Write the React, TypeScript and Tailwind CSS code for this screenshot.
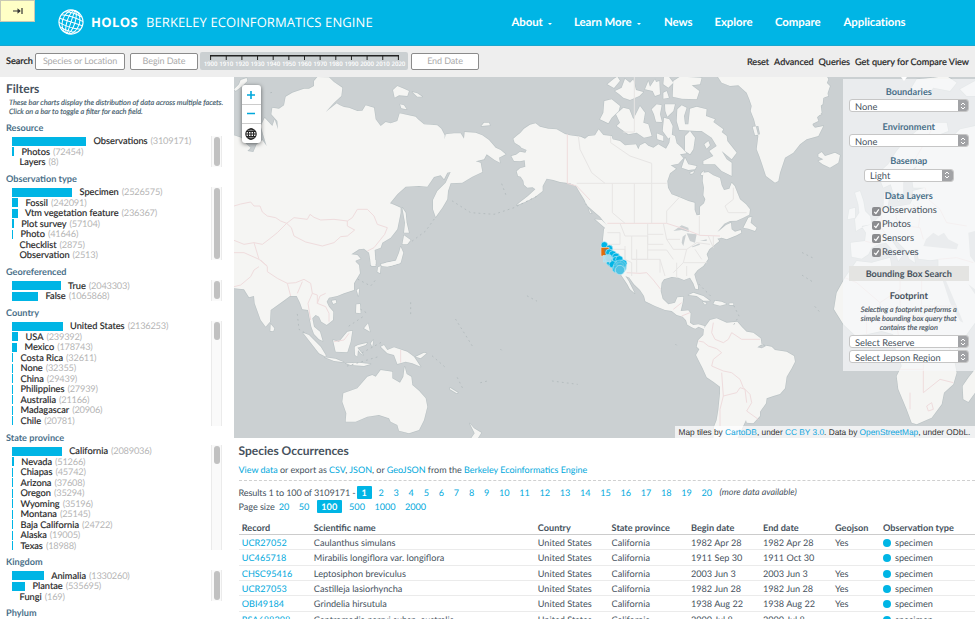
import React from "react";

type Facet = { label: string; count: number; bar: number };
type Section = { title: string; thumb: number; rows: Facet[] };

const f = (label: string, count: number, bar: number): Facet => ({ label, count, bar });

const sections: Section[] = [
  { title: "Resource", thumb: 29, rows: [f("Observations", 3109171, 74), f("Photos", 72454, 2), f("Layers", 8, 0)] },
  {
    title: "Observation type",
    thumb: 71,
    rows: [
      f("Specimen", 2526575, 60),
      f("Fossil", 242091, 6),
      f("Vtm vegetation feature", 236367, 5.5),
      f("Plot survey", 57104, 1.8),
      f("Photo", 41646, 1),
      f("Checklist", 2875, 0),
      f("Observation", 2513, 0),
    ],
  },
  { title: "Georeferenced", thumb: 18, rows: [f("True", 2043303, 48.5), f("False", 1065868, 26)] },
  {
    title: "Country",
    thumb: 18,
    rows: [
      f("United States", 2136253, 50.5),
      f("USA", 239392, 6),
      f("Mexico", 178743, 5),
      f("Costa Rica", 32611, 1),
      f("None", 32355, 1),
      f("China", 29439, 1),
      f("Philippines", 27939, 1),
      f("Australia", 21166, 1),
      f("Madagascar", 20906, 1),
      f("Chile", 20781, 1),
    ],
  },
  {
    title: "State province",
    thumb: 18,
    rows: [
      f("California", 2089036, 49.7),
      f("Nevada", 51266, 1.8),
      f("Chiapas", 45742, 1),
      f("Arizona", 37608, 1),
      f("Oregon", 35294, 1),
      f("Wyoming", 35196, 1),
      f("Montana", 25145, 1),
      f("Baja California", 24722, 1),
      f("Alaska", 19005, 1),
      f("Texas", 18988, 1),
    ],
  },
  { title: "Kingdom", thumb: 29, rows: [f("Animalia", 1330260, 31.7), f("Plantae", 535695, 13), f("Fungi", 169, 0)] },
];

const records = [
  ["UCR27052", "Caulanthus simulans", "1982 Apr 28", "1982 Apr 28", "Yes"],
  ["UC465718", "Mirabilis longiflora var. longiflora", "1911 Sep 30", "1911 Oct 30", ""],
  ["CHSC95416", "Leptosiphon breviculus", "2003 Jun 3", "2003 Jun 3", "Yes"],
  ["UCR27053", "Castilleja lasiorhyncha", "1982 Jun 28", "1982 Jun 28", "Yes"],
  ["OBI49184", "Grindelia hirsutula", "1938 Aug 22", "1938 Aug 22", "Yes"],
  ["RSA688298", "Centromadia parryi subsp. australis", "2000 Jul 8", "2000 Jul 8", ""],
];

function Logo() {
  return (
    <svg width="26" height="26" viewBox="-13 -13 26 26" fill="none" stroke="white" strokeWidth="1">
      <g transform="rotate(18)">
        <circle r="12" strokeWidth="1.2" />
        <ellipse rx="4" ry="12" />
        <ellipse rx="8.5" ry="12" />
        <path d="M0-12V12M-12 0H12M-11.3-4Q0-6.5 11.3-4M-11.3 4Q0 6.5 11.3 4M-8.8-8Q0-10.5 8.8-8M-8.8 8Q0 10.5 8.8 8" />
      </g>
    </svg>
  );
}

function Header() {
  return (
    <header className="relative flex h-[46px] shrink-0 items-center border-b border-[#18a7d0] bg-[#00b5e5] text-white">
      <div className="absolute left-0 top-0 flex h-[22px] w-[35px] items-center justify-center border border-[#c9c9b4] bg-[#ffffc6]">
        <svg width="10" height="8" viewBox="0 0 10 8" fill="none" stroke="#333" strokeWidth="1.2">
          <path d="M0 4H7M9 1V7" />
          <path d="M4.5 1.2L7.8 4L4.5 6.8Z" fill="#333" stroke="none" />
        </svg>
      </div>
      <div className="ml-[58px] flex w-[453.5px] items-center">
        <div className="-mt-[2px]"><Logo /></div>
        <span className="ml-[7px] w-[55px] whitespace-nowrap font-['Open_Sans',sans-serif] text-[13px] font-bold tracking-[0.35px]">HOLOS</span>
        <span className="whitespace-nowrap font-['Open_Sans',sans-serif] text-[13px] tracking-[0.1px]">BERKELEY ECOINFORMATICS ENGINE</span>
      </div>
      <nav className="grid grid-cols-[62.5px_90px_50.5px_60.5px_68.5px_70px] whitespace-nowrap pt-[1px] text-[11.4px] font-bold tracking-[-0.07px]">
        <span className="flex items-center">About<i className="ml-[5px] mt-[2px] border-x-[2.5px] border-t-2 border-x-transparent border-t-white" /></span>
        <span className="flex items-center">Learn More<i className="ml-[5px] mt-[2px] border-x-[2.5px] border-t-2 border-x-transparent border-t-white" /></span>
        <span>News</span>
        <span>Explore</span>
        <span>Compare</span>
        <span>Applications</span>
      </nav>
    </header>
  );
}

function Timeline() {
  const years = Array.from({ length: 13 }, (_, i) => 1900 + i * 10);
  return (
    <svg className="ml-[2px] rounded-[2px] bg-[#cbd0d2]" width="208" height="18" viewBox="0 0 208 18">
      <path d="M10 3.7H199" stroke="#222" strokeWidth="1.4" />
      {years.map((y, i) => (
        <g key={y}>
          <path d={`M${10.6 + i * 15.65} 3V8`} stroke="#222" strokeWidth="1" />
          <text x={10.6 + i * 15.65} y="14.2" fill="white" fontSize="6.1" textAnchor="middle" fontFamily="Open Sans, sans-serif" fontWeight="600">{y}</text>
        </g>
      ))}
    </svg>
  );
}

function SearchBar() {
  const input = "flex h-[17px] items-center justify-center rounded-[2px] border border-[#8b8b8b] bg-white text-[9px] tracking-[-0.1px] text-[#aaa]";
  return (
    <div className="flex h-[31px] shrink-0 items-center justify-between bg-[#eee] pb-[1px] pl-[6px] pr-[6px] text-[9.1px] text-[#222]">
      <div className="flex items-center">
        <span className="w-[29px] font-medium [-webkit-text-stroke:0.2px]">Search</span>
        <span className={`${input} w-[90px]`}>Species or Location</span>
        <span className={`${input} ml-[5px] w-[68px]`}>Begin Date</span>
        <Timeline />
        <span className={`${input} ml-[3px] w-[68px]`}>End Date</span>
      </div>
      <div className="flex gap-[5px] whitespace-nowrap pt-[1px] text-[9.1px] [-webkit-text-stroke:0.2px]">
        <span>Reset</span>
        <span>Advanced</span>
        <span>Queries</span>
        <span>Get query for Compare View</span>
      </div>
    </div>
  );
}

function Sidebar() {
  return (
    <aside className="w-[234px] shrink-0 overflow-hidden bg-white pl-[6px]">
      <h2 className="mt-[4px] h-[15px] text-[12px] font-bold leading-[15px] text-[#46525d]">Filters</h2>
      <p className="ml-[3px] mt-[1.5px] whitespace-nowrap text-[7.37px] italic leading-[9.2px] text-[#435b6b] [-webkit-text-stroke:0.15px]">
        These bar charts display the distribution of data across multiple facets.
        <br />
        Click on a bar to toggle a filter for each field.
      </p>
      {sections.map((s, i) => (
        <section key={s.title}>
          <h3 className={`${i === 0 ? "h-[19.6px] pt-[6px]" : "h-[19.7px] pt-[6px]"} text-[9.15px] font-bold leading-[12px] text-[#4a7089]`}>{s.title}</h3>
          <div className="flex justify-between pl-[6px] pr-[12px]">
            <div className="-mb-[0.5px] pt-[0.5px]">
              {s.rows.map((r) => (
                <div key={r.label} className="flex h-[10.5px] items-center whitespace-nowrap text-[9.25px] leading-[10px]">
                  <span className="h-[9px] bg-[#00b5e5]" style={{ width: r.bar }} />
                  <span className="ml-[7.5px] text-[#222] [-webkit-text-stroke:0.15px]">{r.label}</span>
                  <span className="ml-[3px] tracking-[-0.22px] text-[#b5b5b5]">({r.count})</span>
                </div>
              ))}
            </div>
            <div className="w-[11px] border-x border-[#ebebeb] bg-[#fafafa] pl-[2px] pt-[1px]">
              <div className="w-[6px] rounded-full bg-[#c1c1c1]" style={{ height: s.thumb }} />
            </div>
          </div>
        </section>
      ))}
      <h3 className="pt-[6px] text-[9.15px] font-bold leading-[12px] text-[#4a7089]">Phylum</h3>
    </aside>
  );
}

const northAmerica =
  "M0,152L-13,142L-30,146L-48,158L-60,172L-66,176L-80,188L-76,200L-60,210L-56,215L-40,222L-44,230L-60,227L-72,236L-86,240L-78,255L-60,256L-46,253L-44,272L-60,277L-70,286L-66,300L-58,302L-50,314L-48,326L-38,335L-22,334L-14,340L-36,360L-62,380L-70,388L-45,378L-14,362L8,345L8,330L20,308L40,312L60,318L90,322L108,330L120,350L132,370L143,390L160,405L180,422L200,448L192,460L190,480L188,500L186,520L192,545L204,565L225,580L240,592L250,607L262,625L270,640L284,652L276,635L266,615L256,600L268,605L282,625L300,642L312,660L316,676L345,690L375,702L395,705L410,717L428,722L438,733L442,746L458,755L466,758L476,752L492,760L494,750L475,745L460,747L450,740L452,712L445,703L422,705L428,680L430,662L412,664L405,680L385,685L368,668L362,645L365,620L372,610L395,603L415,605L432,612L450,605L460,622L466,638L474,640L474,630L467,610L463,595L473,582L490,570L505,548L500,535L508,520L520,510L538,495L532,488L545,485L560,490L590,478L604,470L602,462L585,467L575,460L573,440L558,447L540,462L532,468L553,443L570,435L590,434L610,425L628,416L630,400L618,385L600,370L592,350L584,330L575,320L568,338L552,342L545,328L540,306L520,298L505,288L490,290L488,315L492,335L490,358L496,370L492,382L480,392L480,416L470,418L464,402L464,380L445,375L415,362L395,355L384,335L382,315L390,292L408,278L392,268L415,263L430,247L420,235L440,232L425,215L410,202L405,180L392,175L388,200L378,218L355,205L340,215L325,209L315,200L300,208L295,220L288,205L255,208L240,195L218,190L215,180L190,177L176,160L165,178L145,180L135,188L122,182L90,178L75,174L50,160L25,158Z";

const islands =
  "M202,25L222,8L232,2L240,14L222,36Z M225,45L245,35L255,8L270,20L280,10L288,42L310,48L298,60L270,72L250,65L238,55Z M315,40L325,15L330,32L345,10L348,18L358,15L360,55L345,60L338,45Z M370,50L380,45L387,65L370,68Z M372,0L385,0L400,20L385,35L370,25Z M398,62L400,15L420,2L485,5L480,25L455,28L478,45L470,70L425,68Z M193,75L215,70L240,90L236,105L215,125L205,142L180,130L190,110Z M228,115L250,95L268,100L280,130L300,90L315,110L310,140L325,145L335,180L312,185L290,170L265,175L230,150L240,140Z M335,100L350,85L365,88L360,115L366,138L348,137L342,115Z M375,85L405,85L400,105L382,122L376,105Z M372,125L388,130L398,150L395,180L385,188L368,165Z M350,172L370,180L370,195L352,190Z M412,100L425,88L440,95L432,120L435,145L445,145L450,98L470,92L500,100L498,120L525,130L520,138L550,160L545,168L560,180L562,195L590,230L575,250L545,225L560,250L575,260L575,300L545,285L525,265L490,265L490,255L520,240L508,225L530,210L515,185L485,165L470,165L418,162L410,135Z M435,245L445,265L470,270L465,280L445,282L425,275Z M435,180L450,165L465,185L460,220L450,235L435,225Z M493,205L505,195L510,208L500,218Z M450,290L462,285L460,292L452,294Z M485,290L492,285L490,298L482,296Z M610,455L625,425L635,422L632,440L650,455L645,465L625,458Z M165,430L185,432L203,450L198,458Z M133,360L142,375L138,385Z M145,395L155,412L150,410Z M532,0L545,20L570,30L595,28L620,50L628,70L635,90L632,105L642,130L655,180L650,220L658,240L665,260L678,300L705,320L715,315L720,290L735,245L760,230L780,205L800,190L835,180L850,150L825,155L815,145L835,135L830,120L845,115L820,105L848,85L850,65L865,60L855,35L865,10L860,0Z M638,152L655,150L660,175L645,178Z M835,235L845,228L855,240L885,230L900,238L895,260L870,275L848,265L835,255L850,250L835,242Z";

const centralSouth =
  "M445,105L460,98L490,108L510,122L490,122L470,108Z M525,122L545,125L560,132L540,137L520,132Z M488,125L500,129L495,134Z M568,130L580,130L580,135L568,135Z M492,205L490,225L475,240L470,260L478,268L468,285L478,305L488,325L500,352L520,365L540,380L540,400L535,450L530,480L522,500L520,540L590,540L618,480L620,488L640,490L660,468L660,455L678,430L680,415L700,408L720,402L735,385L740,350L755,325L765,305L762,288L740,275L705,270L695,260L665,255L662,235L640,218L620,215L605,200L592,185L560,188L530,175L510,180Z M652,262L665,253L678,258L665,265Z";

const asia =
  "M0,178L22,185L38,205L50,215L40,225L58,228L68,205L85,192L98,210L88,178L80,150L92,125L115,150L122,130L132,160L130,135L112,115L115,95L135,98L150,88L155,62L175,50L190,45L210,38L225,38L240,30L240,15L250,3L285,4L300,18L325,35L322,60L300,80L275,108L308,82L318,88L330,93L345,95L370,105L385,104L395,88L420,95L425,130L440,150L455,138L470,142L490,135L497,112L545,122L552,130L570,145L610,148L622,158L632,178L632,190L635,175L660,172L680,172L690,188L692,168L725,170L745,178L765,192L785,215L800,222L815,235L795,245L798,260L782,252L758,235L750,250L725,256L740,260L745,288L715,302L685,320L650,322L642,345L640,370L625,395L605,423L597,400L597,372L610,345L635,320L650,288L640,290L630,310L620,298L600,303L580,332L555,330L515,332L490,355L468,382L480,386L500,395L500,410L490,460L470,485L445,500L440,515L422,522L425,570L412,570L405,530L390,518L375,520L352,535L370,537L380,548L362,555L365,570L0,570Z M0,40L15,25L20,12L38,6L40,15L25,30L5,45Z M477,42L490,30L510,38L525,45L520,60L495,58L482,65Z M535,48L550,52L565,62L550,62Z M498,85L510,88L518,100L502,97Z M742,150L750,140L765,140L768,148Z M505,395L515,410L518,440L525,470L510,470L513,440Z M510,478L530,492L520,505L505,505Z M500,512L508,530L500,560L470,570L445,570L440,564L485,555L495,530Z";

const southAsia =
  "M0,-10L365,-10L365,5L375,15L378,40L360,70L360,90L330,100L310,108L285,113L278,125L285,140L298,155L297,180L278,195L262,185L255,170L245,165L235,175L240,200L258,215L266,243L255,238L240,222L232,200L222,150L205,148L198,128L188,108L168,108L155,118L110,150L108,185L95,200L80,180L62,130L60,108L45,112L30,88L0,85Z M110,192L121,205L118,214L109,213Z M293,122L305,120L307,128L298,132Z M368,90L376,85L373,108Z M367,133L378,132L380,160L366,158Z M390,205L402,190L408,215Z M410,0L425,0L425,12L410,15Z M432,22L440,18L438,40L430,35Z M440,18L455,8L495,0L498,10L460,20Z M207,218L225,225L260,260L275,285L275,290L255,280Z M272,292L305,296L330,307L300,303Z M335,310L375,308L410,312L390,318L350,315Z M297,240L315,245L340,215L355,212L350,245L340,277L305,275Z M362,260L372,255L400,248L395,255L370,263L388,285L380,280L372,270L370,290L363,285Z M410,250L418,240L415,260Z M440,260L450,255L460,270L480,262L520,275L540,290L560,320L535,310L515,305L490,312L480,285L460,280Z M545,290L570,278L578,280L560,295Z M512,320L518,342L532,350L535,375L555,392L575,415L580,440L570,480L555,510L525,520L495,512L490,495L470,485L465,475L435,465L400,470L365,485L335,485L337,460L325,425L328,400L370,385L400,350L415,345L425,350L440,330L475,335L475,355L498,368L508,350Z M648,383L672,398L668,400L648,388Z M707,490L720,505L742,518L732,534L712,534L722,520Z";

const europeAfrica =
  "M170,555L215,560L270,545L275,575L298,580L320,597L335,580L365,585L400,592L415,575L415,550L390,553L355,548L352,520L340,522L345,560L328,548L315,520L285,490L270,485L290,515L310,535L295,555L285,530L258,500L235,505L215,515L205,535L185,548L155,542L152,500L195,495L198,470L185,450L215,445L245,415L250,400L252,352L266,345L266,375L262,395L300,390L330,385L340,365L338,345L375,335L340,335L335,300L350,270L325,290L310,320L310,355L295,375L280,350L272,325L250,335L240,310L242,285L265,265L290,225L320,190L350,165L395,140L440,140L445,165L420,175L450,190L480,160L525,150L525,740L500,775L460,840L470,890L460,925L432,950L425,985L395,1025L350,1045L335,1040L320,1000L295,940L290,900L305,870L295,830L275,800L280,775L245,765L200,775L165,778L130,745L102,700L110,650L135,605Z M168,465L190,452L215,445L210,420L195,405L190,375L180,345L165,350L175,385L178,410L165,430Z M143,430L148,400L165,395L165,425Z M490,970L488,930L505,905L525,880L525,950L505,978Z M320,60L350,10L400,5L440,0L470,20L450,45L400,35L380,60L350,55Z M480,40L525,15L525,60L500,60Z M95,0L60,0L90,30L80,60L60,70L65,110L40,135L35,160L0,165L0,0Z";

function MapView() {
  return (
    <svg className="block" width="741" height="361" viewBox="0 3 2223 1083">
      <defs>
        <g id="land">
          <path d={asia} />
          <path d={southAsia} transform="translate(0 552)" />
          <path d={northAmerica} transform="translate(918 0)" />
          <path d={islands} transform="translate(918 0)" />
          <path d={centralSouth} transform="translate(918 552)" />
          <path d={europeAfrica} transform="translate(1698 0)" />
        </g>
      </defs>
      <rect width="2223" height="1086" fill="#cbd0d2" />
      <use href="#land" fill="#f5f5f3" stroke="#bcc4c6" strokeWidth="4" strokeLinejoin="round" />
      <use href="#land" fill="#f5f5f3" />
      {/* Inland water */}
      <g fill="#cbd0d2" transform="translate(918 0)">
        <path d="M400,465L425,448L445,455L447,468L425,462Z M428,482L438,475L430,510L425,500Z M440,472L470,475L465,500L450,495Z M455,512L478,502L480,506L458,514Z M480,495L500,490L500,495Z M462,350h8v10h-8z" />
      </g>
      <g fill="#cbd0d2" transform="translate(1698 0)">
        <path d="M370,510L378,490L400,470L415,480L432,470L445,490L475,505L470,520L420,515Z M422,595L432,600L470,690L490,740L480,735L450,680Z M505,470L525,465L525,560L510,540Z M525,640L505,625L525,655Z" />
      </g>
      {/* Country borders */}
      <g fill="none" stroke="#efdcdd" strokeWidth="3">
        <path d="M0,390L20,384L50,378L60,390L78,390L85,408L100,420L125,425L140,435L158,442L180,425L220,430L228,415L240,424L260,432L300,430L340,435L355,425L370,400L400,400L420,420L430,445L460,455L452,475L440,490L420,515L400,525 M158,442L172,455L180,480L215,498L265,510L300,500L320,482L340,480L362,462L340,450L340,435 M158,442L130,470L105,490L85,505L60,500L30,505L0,493 M60,500L75,550L30,530L0,530 M75,550L100,570" />
        <g transform="translate(0 552)">
          <path d="M80,0L100,20L100,35L130,55L160,70L185,68L210,58L230,70L235,100L222,130L230,180 M160,70L170,108M190,100L205,65 M235,100L250,105L250,130L275,140L285,160L285,185M250,130L258,108L275,100M300,245L330,240L345,220 M500,270V308M0,80L20,75L50,50L60,30L75,20" />
        </g>
        <g transform="translate(918 0)">
          <path d="M82,175V322L110,330L150,372 M202,442H380L430,458L480,478L540,480 M260,590L300,592L320,590L340,612L362,640 M400,700L425,680M425,720L450,710" />
          <path d="M520,740L515,770L525,790L550,800L565,790L575,770L605,790L660,790 M475,795L490,798L505,810L530,818L545,830L520,850L515,870L550,885L575,890L600,910L610,935L630,955L635,980L620,1005L655,1030 M545,890L550,960L540,1000L540,1050 M550,960L590,950L600,935L615,940L620,980" />
        </g>
        <g transform="translate(1698 0)">
          <path d="M195,495L230,505M245,420L240,450L258,475M285,400L290,430L320,450L360,455L370,490M340,385L360,420L355,455M375,335L385,370L420,400L440,440L500,450M345,250L380,190L400,150M135,605L170,620L240,680L300,640V590M300,640V700L340,720H440M365,585V690H470M240,680L235,740L290,750L330,720M200,775V700M290,750L300,800L340,820L400,780L440,800L460,840M300,880H370V840L420,850M370,880V950L420,910L460,920M330,1000V950M380,990L395,980L400,1000L385,1005ZM415,550L470,545L520,560" />
        </g>
      </g>
      {/* State and province borders */}
      <g transform="translate(918 0)" fill="none" stroke="#e7e5e4" strokeWidth="3">
        <path d="M110,322H380 M217,322V410L255,442 M283,322V442 M335,262V442 M115,180L120,220L155,290L195,322 M212,180V200L270,240L335,262 M420,362L380,405V442 M478,420V478 M283,0V168H250 M580,335L580,370L555,390L565,410H620 M202,470H240V505H195M240,442L255,480H275M275,480H323V550H275ZM323,442V505H370M323,475H370M255,510V550L275,560V600M193,520H255V550M275,550H360V590M290,520V590M323,522H380L400,550M370,442L380,490L400,520M380,490H420M400,520L440,520L430,560L400,590M440,520L470,500L510,505M430,560H500M410,560V605M440,570V600M465,520L485,550M505,480L520,515M520,480V510M360,550L375,600" />
      </g>
      {/* Small islands */}
      <g fill="none" stroke="#b0b8ba" strokeWidth="2.5" strokeLinecap="round" strokeDasharray="3 12">
        <path d="M600,430L575,465L535,495M655,375L710,410L780,415L840,395L910,360M190,715L195,760L220,775M372,610L410,630L430,605M1395,625L1430,660M1500,690L1515,720L1500,745" />
        <path d="M530,680V715M595,840L635,875M665,730L715,810M670,905L685,935M740,920L760,915M880,660L908,675M800,820L810,830M955,915L1030,925M1705,598L1740,620M1743,692L1757,708M1325,805L1335,815M345,750L390,720M385,830L440,800M380,700L405,715M340,870L440,840M1705,530L1745,550M110,50L120,48M815,355L800,315" />
      </g>
      {/* Observation and reserve markers */}
      <g transform="translate(918 0)" stroke="#b9e6f3" strokeWidth="2">
        <circle cx="193" cy="507" r="10" fill="#00b5e5" />
        <circle cx="208" cy="517" r="10" fill="#00b5e5" />
        <rect x="183" y="514" width="24" height="26" fill="#e36c0a" stroke="#e8d9ca" />
        <path d="M192,520h14v20h-10z" fill="#7a8072" stroke="none" />
        {[[208, 530], [218, 535], [228, 542], [210, 558], [228, 552], [238, 550], [250, 562], [218, 565], [240, 570], [228, 578]].map(([x, y]) => (
          <circle key={`${x}-${y}`} cx={x} cy={y} r="11" fill="#00b5e5" />
        ))}
        <rect x="190" y="538" width="22" height="20" fill="#b4ddec" opacity=".9" />
        <circle cx="205" cy="546" r="11" fill="#a9d9ea" opacity=".8" />
        <circle cx="240" cy="572" r="20" fill="#52c5e4" opacity=".75" />
        <circle cx="240" cy="582" r="14" fill="#4fc2e3" />
      </g>
    </svg>
  );
}

function Select({ value, className }: { value: string; className: string }) {
  return (
    <div className={`flex h-[13px] items-center justify-between overflow-hidden rounded-[3px] border border-[#c6c6c6] bg-white pl-[5.5px] text-[9.3px] leading-none text-[#46525d] ${className}`}>
      <span className="pt-[1px]">{value}</span>
      <span className="flex h-full w-[10.5px] items-center justify-center bg-[#a2a3a6]">
        <svg width="6" height="8" viewBox="0 0 6 8" fill="none" stroke="white" strokeWidth="1">
          <path d="M1 3L3 1L5 3M1 5L3 7L5 5" />
        </svg>
      </span>
    </div>
  );
}

function LayerPanel() {
  const heading = "text-center text-[9.2px] font-bold leading-[12px] text-[#4a7089]";
  return (
    <div className="absolute right-0 top-[2px] h-[292px] w-[132px] bg-[#f7f8fa]/70 pl-[5.5px] pr-[6px] pt-[7.2px]">
      <div className="absolute left-[58px] top-[-2px] border-x-[3px] border-t-[4px] border-x-transparent border-t-white" />
      <h4 className={heading}>Boundaries</h4>
      <Select value="None" className="mt-[1.2px] w-[120.5px]" />
      <h4 className={`${heading} mt-[8.4px]`}>Environment</h4>
      <Select value="None" className="mt-[1.5px] w-[120.5px]" />
      <h4 className={`${heading} mt-[8.2px]`}>Basemap</h4>
      <Select value="Light" className="ml-[15px] mt-[1.5px] w-[90px]" />
      <h4 className={`${heading} mt-[8.2px]`}>Data Layers</h4>
      <div className="ml-[23px] mt-[2.2px] text-[9.4px] text-[#46525d]">
        {["Observations", "Photos", "Sensors", "Reserves"].map((name) => (
          <div key={name} className="flex h-[13.8px] items-center whitespace-nowrap">
            <span className="mr-[1.5px] flex size-[9px] items-center justify-center rounded-[2px] bg-[#8b8c8f]">
              <svg width="7" height="7" viewBox="0 0 7 7" fill="none" stroke="white" strokeWidth="1.2">
                <path d="M1.2 3.8L2.9 5.5L5.8 1.3" />
              </svg>
            </span>
            {name}
          </div>
        ))}
      </div>
      <div className="mt-[6.2px] h-[15px] w-[120.5px] bg-[#e4e4e2] text-center text-[9.1px] font-bold leading-[15px] text-[#46525d]">Bounding Box Search</div>
      <h4 className="mt-[9.5px] text-center text-[9.2px] font-bold leading-[12px] text-[#46525d]">Footprint</h4>
      <p className="mt-[3px] whitespace-nowrap text-center text-[7.37px] italic leading-[9px] text-[#46525d] [-webkit-text-stroke:0.15px]">
        Selecting a footprint performs a
        <br />
        simple bounding box query that
        <br />
        contains the region
      </p>
      <Select value="Select Reserve" className="mt-[3px] w-[120.5px]" />
      <Select value="Select Jepson Region" className="mt-[2px] w-[120.5px]" />
    </div>
  );
}

function ZoomControl() {
  return (
    <div className="absolute left-[7.5px] top-[8px] w-[19px] overflow-hidden rounded-[3px] bg-white shadow-[0_1px_4px_rgba(0,0,0,0.55)]">
      <div className="flex h-[20px] items-center justify-center border-b border-[#ccc]">
        <svg width="8" height="8" viewBox="0 0 8 8" stroke="#00a8dc" strokeWidth="1.6"><path d="M0 4H8M4 0V8" /></svg>
      </div>
      <div className="flex h-[19px] items-center justify-center border-b border-[#ccc]">
        <svg width="8" height="8" viewBox="0 0 8 8" stroke="#00a8dc" strokeWidth="1.6"><path d="M0 3.5H8" /></svg>
      </div>
      <div className="flex h-[19px] items-center justify-center">
        <svg width="12" height="12" viewBox="-6 -6 12 12" fill="none" stroke="#222" strokeWidth="1.1">
          <circle r="5.2" />
          <ellipse rx="2.7" ry="5.2" />
          <path d="M0-5V5M-5 0H5M-4.5-2.5H4.5M-4.5 2.5H4.5" />
        </svg>
      </div>
    </div>
  );
}

function Results() {
  const link = "text-[#00a8dc]";
  const cols = "grid grid-cols-[72px_224px_73.8px_79.4px_72px_72px_48px_90px] pl-[3.3px] whitespace-nowrap";
  return (
    <div className="overflow-hidden pl-[4.5px] text-[9.15px] text-[#46525d]">
      <h2 className="mt-[4.5px] h-[16px] text-[12px] font-bold leading-[16px]">Species Occurrences</h2>
      <p className="mt-[4.5px] h-[17px] whitespace-nowrap text-[8.97px] leading-[13px]">
        <span className={link}>View data</span> or export as <span className={link}>CSV</span>, <span className={link}>JSON</span>, or <span className={link}>GeoJSON</span> from the <span className={link}>Berkeley Ecoinformatics Engine</span>
      </p>
      <div className="border-t border-dashed border-[#d0d0d0]" />
      <div className="mt-[5px] flex h-[13px] items-center whitespace-nowrap leading-none">
        <span className="w-[118.5px] tracking-[-0.13px]">Results 1 to 100 of 3109171 -</span>
        <b className="mr-[2px] flex h-[12.5px] w-[14.5px] items-center justify-center rounded-[1px] bg-[#00b5e5] text-white">1</b>
        {Array.from({ length: 19 }, (_, i) => i + 2).map((n) => (
          <span key={n} className={`${n < 10 ? "w-[15.1px]" : "w-[20.25px]"} text-center text-[#00a8dc]`}>{n}</span>
        ))}
        <i className="ml-[2.5px] text-[8.95px]">(more data available)</i>
      </div>
      <div className="mt-[1px] flex h-[13px] items-center whitespace-nowrap leading-none">
        <span className="w-[35.5px] tracking-[-0.05px]">Page size</span>
        <span className="w-[20px] text-center text-[#00a8dc]">20</span>
        <span className="w-[20px] text-center text-[#00a8dc]">50</span>
        <b className="ml-[3px] mr-[3px] flex h-[12.5px] w-[24.5px] items-center justify-center rounded-[1px] bg-[#00b5e5] text-white">100</b>
        <span className="w-[25px] text-center text-[#00a8dc]">500</span>
        <span className="w-[31px] text-center text-[#00a8dc]">1000</span>
        <span className="w-[30px] text-center text-[#00a8dc]">2000</span>
      </div>
      <div className={`${cols} mt-[7px] h-[15px] border-b border-[#ccc] font-bold leading-[15px]`}>
        <span>Record</span>
        <span>Scientific name</span>
        <span>Country</span>
        <span>State province</span>
        <span>Begin date</span>
        <span>End date</span>
        <span>Geojson</span>
        <span>Observation type</span>
      </div>
      {records.map(([id, name, begin, end, geo]) => (
        <div key={id} className={`${cols} h-[15.35px] items-center border-b border-[#ebebeb] pt-[1px] leading-[14px]`}>
          <span className={link}>{id}</span>
          <span>{name}</span>
          <span>United States</span>
          <span>California</span>
          <span>{begin}</span>
          <span>{end}</span>
          <span>{geo}</span>
          <span className="flex items-center gap-[4px]"><i className="size-[8px] rounded-full bg-[#00b5e5]" />specimen</span>
        </div>
      ))}
    </div>
  );
}

export default function App() {
  const blue = "text-[#0da5de]";
  return (
    <div className="flex h-[619px] w-[975px] flex-col overflow-hidden bg-white font-[Lato,sans-serif] [text-rendering:geometricPrecision]">
      <Header />
      <SearchBar />
      <div className="flex min-h-0 flex-1">
        <Sidebar />
        <main className="flex w-[741px] flex-col overflow-hidden">
          <div className="relative h-[361px] shrink-0">
            <MapView />
            <ZoomControl />
            <LayerPanel />
            <div className="absolute bottom-0 right-0 h-[12px] w-[300px] whitespace-nowrap bg-white/70 pl-[3.5px] font-['Liberation_Sans',Arial,sans-serif] text-[8.3px] leading-[12px] text-[#333]">
              Map tiles by <span className={blue}>CartoDB</span>, under <span className={blue}>CC BY 3.0</span>. Data by <span className={blue}>OpenStreetMap</span>, under ODbL.
            </div>
          </div>
          <Results />
        </main>
      </div>
    </div>
  );
}
